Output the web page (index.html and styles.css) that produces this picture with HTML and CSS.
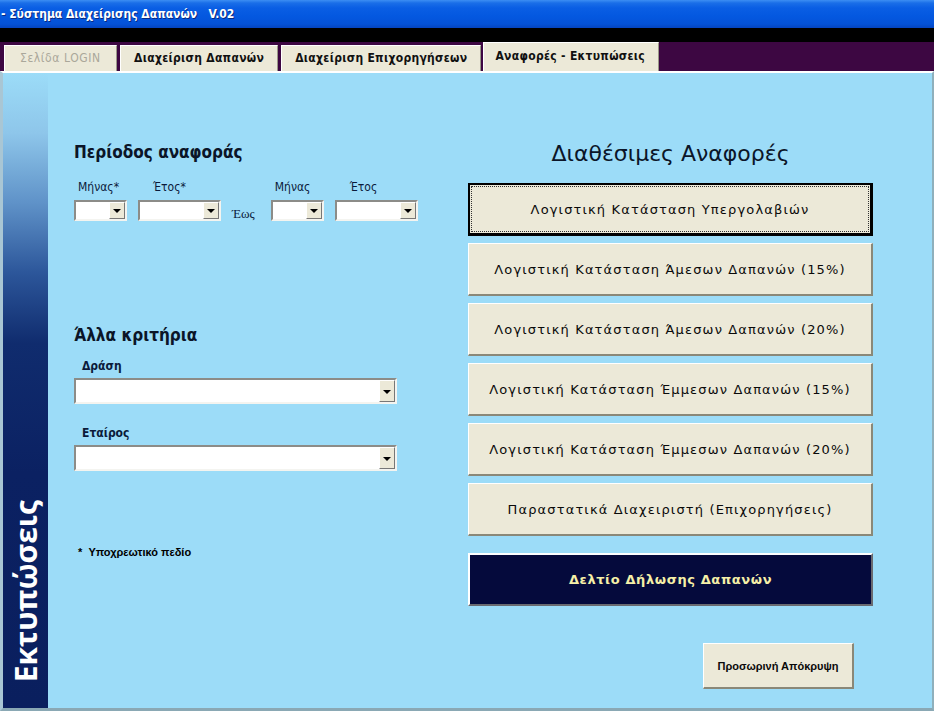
FILE: index.html
```html
<!DOCTYPE html>
<html lang="el">
<head>
<meta charset="utf-8">
<title>Σύστημα Διαχείρισης Δαπανών</title>
<link rel="stylesheet" href="styles.css">
</head>
<body>
<div class="window">
  <div class="titlebar">- Σύστημα Διαχείρισης Δαπανών&nbsp;&nbsp;&nbsp;V.02</div>
  <div class="blackband"></div>
  <div class="tabstrip">
    <div class="tab disabled">Σελίδα LOGIN</div>
    <div class="tab">Διαχείριση Δαπανών</div>
    <div class="tab">Διαχείριση Επιχορηγήσεων</div>
    <div class="tab active">Αναφορές - Εκτυπώσεις</div>
  </div>
  <div class="content">
    <div class="sidebar"><span class="sidebar-text">Εκτυπώσεις</span></div>
    <div class="main">
      <div class="leftcol">
        <h2 class="heading period">Περίοδος αναφοράς</h2>
        <div class="period-row">
          <div class="field">
            <span class="lbl lbl-m">Μήνας*</span>
            <div class="combo small"><span class="arrow"></span></div>
          </div>
          <div class="field">
            <span class="lbl lbl-y">Έτος*</span>
            <div class="combo mid"><span class="arrow"></span></div>
          </div>
          <span class="until">Έως</span>
          <div class="field">
            <span class="lbl lbl-m">Μήνας</span>
            <div class="combo small"><span class="arrow"></span></div>
          </div>
          <div class="field">
            <span class="lbl lbl-y">Έτος</span>
            <div class="combo mid"><span class="arrow"></span></div>
          </div>
        </div>
        <h2 class="heading other">Άλλα κριτήρια</h2>
        <div class="field wide">
          <span class="lbl lbl-w">Δράση</span>
          <div class="combo big"><span class="arrow"></span></div>
        </div>
        <div class="field wide second">
          <span class="lbl lbl-w">Εταίρος</span>
          <div class="combo big"><span class="arrow"></span></div>
        </div>
        <p class="note">*&nbsp;&nbsp;Υποχρεωτικό πεδίο</p>
      </div>
      <div class="rightcol">
        <h2 class="reports-title">Διαθέσιμες Αναφορές</h2>
        <div class="btn focused"><span class="focus">Λογιστική Κατάσταση Υπεργολαβιών</span></div>
        <div class="btn">Λογιστική Κατάσταση Άμεσων Δαπανών (15%)</div>
        <div class="btn">Λογιστική Κατάσταση Άμεσων Δαπανών (20%)</div>
        <div class="btn">Λογιστική Κατάσταση Έμμεσων Δαπανών (15%)</div>
        <div class="btn">Λογιστική Κατάσταση Έμμεσων Δαπανών (20%)</div>
        <div class="btn">Παραστατικά Διαχειριστή (Επιχορηγήσεις)</div>
        <div class="btn dark">Δελτίο Δήλωσης Δαπανών</div>
        <div class="hide-row"><div class="btn hide">Προσωρινή Απόκρυψη</div></div>
      </div>
    </div>
  </div>
</div>
</body>
</html>
```

FILE: styles.css
```css
* { box-sizing: border-box; }
html, body { margin: 0; padding: 0; }
body {
  width: 934px;
  height: 711px;
  overflow: hidden;
  font-family: "DejaVu Sans", Tahoma, sans-serif;
  background: #9cdcf8;
}
.window { display: flex; flex-direction: column; height: 711px; }

.titlebar {
  height: 28px;
  flex: none;
  background: linear-gradient(to bottom, #3c8ef3 0px, #1a6ee8 3px, #0a5ee4 8px, #0458e0 16px, #0452d8 24px, #0444c0 28px);
  color: #fff;
  font-family: "DejaVu Sans Condensed", "DejaVu Sans", sans-serif;
  font-weight: bold;
  font-size: 12px;
  line-height: 28px;
  padding-left: 1px;
  text-shadow: 1px 1px 0 #0a2a80;
  white-space: pre;
}
.blackband { height: 14px; flex: none; background: #000; }

.tabstrip {
  height: 29px;
  flex: none;
  background: #3d0742;
  display: flex;
  align-items: flex-end;
  padding-left: 4px;
  gap: 3px;
}
.tab {
  height: 26px;
  background: #ece9d8;
  border-top: 1px solid #fff;
  border-left: 1px solid #fff;
  border-right: 1px solid #9a9888;
  font-family: "DejaVu Sans Condensed", "DejaVu Sans", sans-serif;
  font-weight: bold;
  font-size: 12px;
  color: #111;
  line-height: 24px;
  padding: 0 13px;
  letter-spacing: 0.3px;
  white-space: nowrap;
}
.tab.disabled {
  color: #aaa79a;
  width: 113px;
  padding: 0 0 0 15px;
  font-weight: normal;
  letter-spacing: 0.6px;
}
.tab.active { height: 29px; margin-left: -1px; line-height: 26px; width: 176px; padding-left: 11px; }

.content {
  flex: 1;
  display: flex;
  background: #9cdcf8;
  border-top: 2px solid #fff;
  border-left: 3px solid #a9c6d4;
  border-right: 2px solid #8fb0bc;
  border-bottom: 3px solid #8aa8b4;
}
.sidebar {
  width: 45px;
  flex: none;
  background: linear-gradient(to bottom, #9cdcf8 0px, #8ec6ea 60px, #5f92c8 130px, #2c569a 200px, #102c6e 270px, #0b2162 400px, #0a1f5e 100%);
  display: flex;
  flex-direction: column;
  justify-content: flex-end;
  align-items: center;
  padding-bottom: 26px;
}
.sidebar-text {
  writing-mode: vertical-rl;
  transform: rotate(180deg);
  color: #fff;
  font-family: "Open Sans", sans-serif;
  font-weight: bold;
  font-size: 30px;
  line-height: 34px;
  letter-spacing: 0;
}

.main {
  flex: 1;
  display: flex;
  padding-left: 26px;
}
.leftcol { width: 394px; flex: none; }
.rightcol { width: 405px; flex: none; display: flex; flex-direction: column; }

.heading {
  margin: 0;
  font-family: "DejaVu Sans Condensed", "DejaVu Sans", sans-serif;
  font-weight: bold;
  font-size: 17px;
  line-height: 20px;
  color: #0b1528;
}
.heading.period { margin-top: 69px; }
.heading.other { margin-top: 104px; }

.period-row { display: flex; align-items: flex-end; margin-top: 18px; }
.field { display: flex; flex-direction: column; }
.period-row .field { margin-right: 11px; }
.lbl {
  font-family: "DejaVu Sans Condensed", "DejaVu Sans", sans-serif;
  font-size: 12px;
  line-height: 14px;
  color: #0b1a3a;
  margin-bottom: 6px;
}
.lbl-m { padding-left: 4px; }
.lbl-y { padding-left: 15px; }
.lbl-w { padding-left: 8px; margin-bottom: 5px; font-weight: bold; font-size: 12px; }
.until {
  font-family: "Liberation Serif", serif;
  font-size: 13px;
  color: #0b1a3a;
  margin: 0 16px -1px 0;
}

.combo {
  position: relative;
  height: 21px;
  background: #fff;
  border-top: 2px solid #8c8c88;
  border-left: 2px solid #8c8c88;
  border-bottom: 2px solid #f4f4f0;
  border-right: 2px solid #f4f4f0;
  display: flex;
  justify-content: flex-end;
}
.combo.small { width: 53px; }
.combo.mid { width: 83px; }
.combo.big { width: 323px; height: 26px; }
.arrow {
  width: 16px;
  height: 100%;
  background: #ece9d8;
  border-top: 1px solid #fff;
  border-left: 1px solid #fff;
  border-right: 1px solid #777;
  border-bottom: 1px solid #777;
  display: flex;
  align-items: center;
  justify-content: center;
}
.arrow::after {
  content: "";
  border-left: 4px solid transparent;
  border-right: 4px solid transparent;
  border-top: 4px solid #000;
  margin-top: 1px;
}
.field.wide { margin-top: 14px; }
.field.wide.second { margin-top: 22px; }

.note {
  margin: 75px 0 0 4px;
  font-family: "Liberation Sans", Arial, sans-serif;
  font-weight: bold;
  font-size: 11px;
  color: #000;
}

.reports-title {
  margin: 67px 0 0 0;
  text-align: center;
  font-family: "DejaVu Sans", sans-serif;
  font-weight: normal;
  font-size: 22px;
  line-height: 27px;
  color: #0b1528;
}
.btn {
  height: 53px;
  margin-top: 7px;
  background: #ece9d8;
  border-top: 1px solid #fff;
  border-left: 1px solid #fff;
  border-right: 2px solid #8a8878;
  border-bottom: 2px solid #8a8878;
  display: flex;
  align-items: center;
  justify-content: center;
  font-family: "DejaVu Sans", sans-serif;
  font-size: 13px;
  letter-spacing: 1.15px;
  color: #0a0a0a;
  white-space: nowrap;
}
.btn.focused {
  margin-top: 16px;
  border: 2px solid #000;
  border-right-width: 3px;
  border-bottom-width: 3px;
  padding: 1px;
}
.btn.focused .focus {
  flex: 1;
  align-self: stretch;
  display: flex;
  align-items: center;
  justify-content: center;
  border: 1px dotted #333;
}
.btn.dark {
  margin-top: 17px;
  background: #050a3c;
  color: #f6f0a8;
  font-weight: bold;
  letter-spacing: 0.6px;
  border-top: 2px solid #fff;
  border-left: 2px solid #fff;
  border-right: 2px solid #6a6a70;
  border-bottom: 2px solid #6a6a70;
}
.hide-row { display: flex; padding-left: 235px; margin-top: 37px; }
.btn.hide {
  width: 151px;
  height: 46px;
  margin-top: 0;
  font-family: "Liberation Sans", Arial, sans-serif;
  font-weight: bold;
  font-size: 11px;
  letter-spacing: 0;
}
```
